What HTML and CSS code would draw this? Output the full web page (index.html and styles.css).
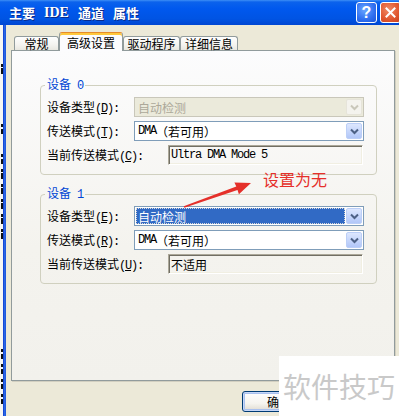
FILE: index.html
```html
<!DOCTYPE html>
<html lang="zh">
<head>
<meta charset="utf-8">
<title>主要 IDE 通道 属性</title>
<link rel="stylesheet" href="styles.css">
</head>
<body>
<div class="screen">
  <div class="titlebar">
    <div class="title"><span>主要</span><span class="latin">IDE</span><span>通道</span><span>属性</span></div>
    <div class="tb-btns">
      <div class="tb-btn help">?</div>
      <div class="tb-btn close">
        <svg width="11" height="11" viewBox="0 0 11 11"><path d="M1.5 1.5 L9.5 9.5 M9.5 1.5 L1.5 9.5" stroke="#fff" stroke-width="2" stroke-linecap="square"/></svg>
      </div>
    </div>
  </div>
  <div class="body">
    <div class="outside">
      <div class="ln x"></div><div class="ln"></div><div class="ln"></div><div class="ln"></div><div class="ln x"></div><div class="ln"></div><div class="ln x"></div><div class="ln x"></div><div class="ln x"></div><div class="ln x"></div><div class="ln x"></div><div class="ln x"></div><div class="ln"></div><div class="ln"></div><div class="ln"></div><div class="ln"></div><div class="ln"></div><div class="ln"></div><div class="ln"></div><div class="ln x"></div><div class="ln x"></div><div class="ln x"></div><div class="ln x"></div>
    </div>
    <div class="frame"></div>
    <div class="client">
      <div class="tabs">
        <div class="tab t1">常规</div>
        <div class="tab active t2">高级设置</div>
        <div class="tab t3">驱动程序</div>
        <div class="tab t4">详细信息</div>
      </div>
      <div class="panel">
        <fieldset class="group">
          <legend>设备<span class="m"> 0</span></legend>
          <div class="row">
            <span class="lbl">设备类型<span class="m">(<u>D</u>):</span></span>
            <div class="combo disabled">
              <div class="val">自动检测</div>
              <div class="dd"><svg width="9" height="7" viewBox="0 0 9 7"><path d="M1 1.5 L4.5 5 L8 1.5" fill="none" stroke-width="2"/></svg></div>
            </div>
          </div>
          <div class="row">
            <span class="lbl">传送模式<span class="m">(<u>T</u>):</span></span>
            <div class="combo">
              <div class="val"><span class="m">DMA </span>（若可用）</div>
              <div class="dd"><svg width="9" height="7" viewBox="0 0 9 7"><path d="M1 1.5 L4.5 5 L8 1.5" fill="none" stroke-width="2"/></svg></div>
            </div>
          </div>
          <div class="row wide">
            <span class="lbl">当前传送模式<span class="m">(<u>C</u>):</span></span>
            <div class="field"><span class="m">Ultra DMA Mode 5</span></div>
          </div>
        </fieldset>
        <fieldset class="group">
          <legend>设备<span class="m"> 1</span></legend>
          <div class="row">
            <span class="lbl">设备类型<span class="m">(<u>E</u>):</span></span>
            <div class="combo">
              <div class="val sel"><span class="focus">自动检测</span></div>
              <div class="dd"><svg width="9" height="7" viewBox="0 0 9 7"><path d="M1 1.5 L4.5 5 L8 1.5" fill="none" stroke-width="2"/></svg></div>
            </div>
          </div>
          <div class="row">
            <span class="lbl">传送模式<span class="m">(<u>R</u>):</span></span>
            <div class="combo">
              <div class="val"><span class="m">DMA </span>（若可用）</div>
              <div class="dd"><svg width="9" height="7" viewBox="0 0 9 7"><path d="M1 1.5 L4.5 5 L8 1.5" fill="none" stroke-width="2"/></svg></div>
            </div>
          </div>
          <div class="row wide">
            <span class="lbl">当前传送模式<span class="m">(<u>U</u>):</span></span>
            <div class="field">不适用</div>
          </div>
        </fieldset>
      </div>
      <div class="actions">
        <div class="button default">确定</div>
      </div>
    </div>
  </div>

  <div class="note">设置为无</div>
  <svg class="arrow" width="399" height="416" viewBox="0 0 399 416">
    <polygon points="183.7,206.2 236.3,186.6 234.4,182.4 251,183 238.9,194.2 237.5,190 184.3,207.8" fill="#e5302a"/>
  </svg>
  <div class="watermark">软件技巧</div>
</div>
</body>
</html>
```
FILE: styles.css
```css
* { box-sizing: border-box; }
html, body { margin: 0; padding: 0; }
body {
  width: 399px;
  height: 416px;
  overflow: hidden;
  background: #ece9d8;
  font-family: "Noto Sans CJK SC", sans-serif;
  font-size: 12px;
  color: #000;
}
.screen {
  position: relative;
  width: 399px;
  height: 416px;
  overflow: hidden;
  display: flex;
  flex-direction: column;
}

/* title bar */
.titlebar {
  height: 25px;
  flex: none;
  display: flex;
  justify-content: space-between;
  padding-left: 9px;
  background: linear-gradient(#3d8ff6 0, #0b62ec 2px, #0058ee 35%, #0054e3 75%, #0046d2 100%);
}
.title {
  display: flex;
  gap: 9px;
  align-items: center;
  color: #fff;
  font-weight: bold;
  font-size: 13px;
  line-height: 16px;
  text-shadow: 1px 1px 0 #0a2a8a;
}
.title .latin { font-family: "Liberation Serif", serif; font-size: 14px; }
.tb-btns {
  display: flex;
  gap: 3px;
  margin-top: 2px;
  margin-right: -2px;
}
.tb-btn {
  width: 21px;
  height: 21px;
  border: 1px solid #fff;
  border-radius: 3px;
  display: flex;
  align-items: center;
  justify-content: center;
}
.help {
  background: radial-gradient(circle at 40% 35%, #6aa6ff, #2f6ff0 60%, #1d56d8);
  color: #fff;
  font-family: "Liberation Sans", sans-serif;
  font-weight: bold;
  font-size: 16px;
  line-height: 16px;
}
.close {
  background: radial-gradient(circle at 40% 35%, #f08a66, #e0562e 60%, #c6401f);
}

/* body */
.body { flex: 1; display: flex; min-height: 0; }
.outside {
  width: 3px;
  flex: none;
  background: #f6f6f4;
  overflow: hidden;
  padding-top: 36px;
}
.ln { height: 15px; display: flex; justify-content: flex-end; align-items: center; }
.ln.x::before {
  content: "";
  width: 2px;
  height: 10px;
  background: linear-gradient(#111 0 30%, transparent 30% 45%, #111 45% 100%);
}
.frame {
  width: 3px;
  flex: none;
  background: linear-gradient(to right, #0b38cf, #2d6ce8 55%, #1a4ed8);
}
.client {
  flex: 1;
  display: flex;
  flex-direction: column;
  padding: 7px 4px 0 5px;
}

/* tabs */
.tabs {
  height: 18px;
  flex: none;
  display: flex;
  align-items: flex-end;
  padding-left: 3px;
  position: relative;
  z-index: 1;
}
.tab {
  height: 14px;
  border: 1px solid #919b9c;
  border-bottom: none;
  border-radius: 3px 3px 0 0;
  background: linear-gradient(#fefefe, #f4f3ef 60%, #e8e7e0);
  display: flex;
  align-items: center;
  justify-content: center;
  line-height: 12px;
  font-size: 12px;
}
.t1 { width: 45px; }
.t2 { width: 64px; }
.t3 { width: 57px; }
.t4 { width: 58px; }
.tab.active {
  height: 19px;
  margin-bottom: -1px;
  border-top: 1px solid #e68b2c;
  box-shadow: inset 0 2px 0 #ffc83c;
  background: #fcfcfe;
  padding-top: 1px;
}

/* panel */
.panel {
  height: 331px;
  flex: none;
  border: 1px solid #919b9c;
  box-shadow: 1px 1px 0 #d2cfc0;
  background: linear-gradient(#fcfcfd, #f4f3ee 60%, #f2f1ec);
  padding: 25px 17px 0 28px;
}
.group {
  margin: 0;
  min-width: 0;
  padding: 1px 12px 7px 6px;
  border: 1px solid #d0d0bf;
  border-radius: 4px;
}
.group + .group { margin-top: 10px; }
.group legend {
  padding: 0 2px;
  margin-left: -2px;
  color: #0046d5;
  line-height: 16px;
}
.m {
  font-family: "Liberation Mono", monospace;
  letter-spacing: -1.2px;
}
.row {
  display: flex;
  align-items: center;
  height: 24px;
}
.lbl { width: 87px; flex: none; white-space: nowrap; }
.row.wide .lbl { width: 121px; }

.combo {
  flex: 1;
  height: 20px;
  display: flex;
  border: 1px solid #7f9db9;
  background: #fff;
  padding: 1px;
}
.combo .val {
  flex: 1;
  display: flex;
  align-items: center;
  padding-left: 2px;
  white-space: nowrap;
}
.combo .dd {
  width: 16px;
  flex: none;
  border: 1px solid #bccff7;
  border-radius: 2px;
  background: linear-gradient(#dde7fe, #c3d4fb 60%, #b2c7f8);
  display: flex;
  align-items: center;
  justify-content: center;
}
.combo .dd path { stroke: #4d6185; }
.combo.disabled { border-color: #c9c7ba; background: #ebeadb; }
.combo.disabled .val { color: #aca899; }
.combo.disabled .dd { background: #f4f3ee; border-color: #e6e4da; }
.combo.disabled .dd path { stroke: #c9c7ba; }
.combo .val.sel {
  background: #316ac5;
  color: #fff;
  padding-left: 1px;
  margin-right: 1px;
  outline: 1px dotted #d8d8d8;
  outline-offset: -1px;
}
.combo .val.sel .focus { padding-left: 1px; }

.field {
  flex: 1;
  height: 20px;
  margin-right: 1px;
  display: flex;
  align-items: center;
  border: 1px solid;
  border-color: #aca899 #fff #fff #aca899;
  box-shadow: inset 1px 1px 0 #716f64, inset -1px -1px 0 #f1efe2;
  padding-left: 2px;
  white-space: nowrap;
}

/* buttons */
.actions {
  flex: 1;
  display: flex;
  align-items: flex-start;
  padding: 10px 0 0 231px;
}
.button {
  width: 75px;
  height: 21px;
  flex: none;
  border: 1px solid #003c74;
  border-radius: 3px;
  background: linear-gradient(#ffffff, #f5f4ef 60%, #dedad0);
  display: flex;
  align-items: center;
  justify-content: flex-start;
  padding-left: 24px;
  overflow: hidden;
}
.button.default { box-shadow: inset 0 0 0 1px #c6d7f7, inset 0 0 0 2px #a9c1ef; }

/* overlays */
.note {
  position: absolute;
  left: 263px;
  top: 170px;
  color: #e5302a;
  font-size: 16px;
  line-height: 18px;
}
.arrow { position: absolute; left: 0; top: 0; pointer-events: none; }
.watermark {
  position: absolute;
  left: 279px;
  top: 356px;
  right: 0;
  bottom: 0;
  background: #fff;
  color: #c9c9c9;
  font-size: 28px;
  line-height: 60px;
  padding-left: 4px;
  white-space: nowrap;
}
```
